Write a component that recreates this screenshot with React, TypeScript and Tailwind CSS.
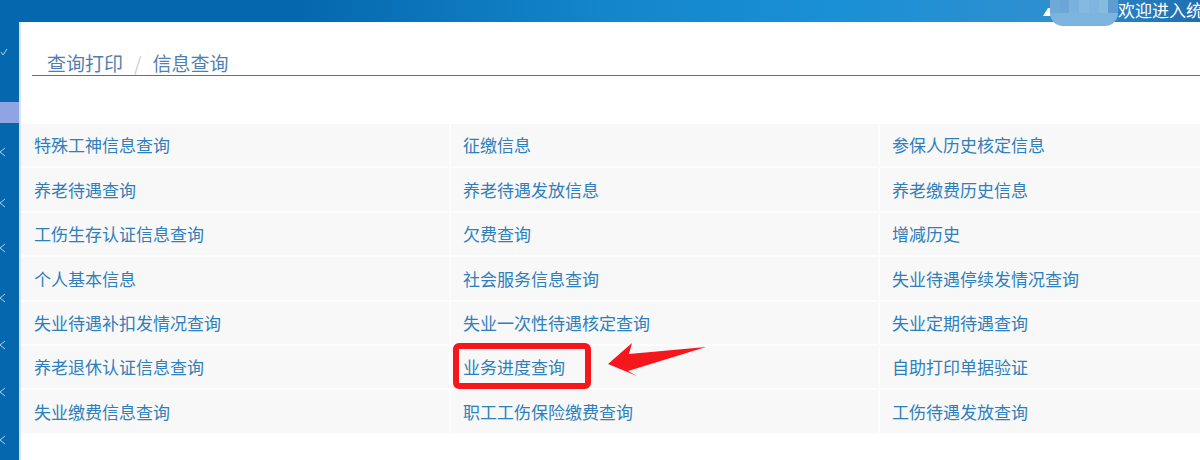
const ROWS = [
  ["特殊工神信息查询", "征缴信息", "参保人历史核定信息"],
  ["养老待遇查询", "养老待遇发放信息", "养老缴费历史信息"],
  ["工伤生存认证信息查询", "欠费查询", "增减历史"],
  ["个人基本信息", "社会服务信息查询", "失业待遇停续发情况查询"],
  ["失业待遇补扣发情况查询", "失业一次性待遇核定查询", "失业定期待遇查询"],
  ["养老退休认证信息查询", "业务进度查询", "自助打印单据验证"],
  ["失业缴费信息查询", "职工工伤保险缴费查询", "工伤待遇发放查询"],
];

// y centres of the sidebar chevrons
const CHEVRONS = [152, 203, 248, 298, 345, 392, 440];

// mosaic colours of the blurred-out user name
const MOSAIC = ["#6fa9d8", "#6da6d6", "#7ab2dd", "#84b9e1", "#7fb5de", "#86bbe2", "#5f9dd0"];

function Sidebar() {
  return (
    <div className="relative w-[19px] shrink-0 bg-[#0568ae]">
      <svg className="absolute left-0 top-[-22px]" width="19" height="460" fill="none" stroke="#a9cfea" strokeWidth="1">
        <path d="M1 52 L3 55 L7 49" />
        {CHEVRONS.map((y) => (
          <path key={y} d={`M5 ${y - 4} L0 ${y} L5 ${y + 4}`} />
        ))}
      </svg>
      <div className="absolute left-0 top-[80px] h-[21px] w-full bg-[#8fa5e3]" />
    </div>
  );
}

function Header() {
  return (
    <div className="relative h-[22px] shrink-0 overflow-hidden bg-[linear-gradient(90deg,#0568ae_0%,#0568ae_25%,#1385cb_50%,#1a90d6_70%,#2f8fcf_88%,#1f6fb0_100%)]">
      <div className="absolute left-[1118px] top-[-2px] whitespace-nowrap text-[17px] leading-[24px] text-white">
        欢迎进入统
      </div>
      <svg className="absolute left-[1042px] top-[6px]" width="10" height="12" fill="#ffffff">
        <path d="M1 10 L6 2 L9 2 L9 10 Z" />
      </svg>
    </div>
  );
}

export default function App() {
  return (
    <div className="relative flex h-[460px] w-[1200px] flex-col overflow-hidden bg-white font-['Noto_Sans_CJK_SC','Liberation_Sans',sans-serif]">
      <Header />
      <div className="flex flex-1">
        <Sidebar />
        <div className="flex-1 border-l-2 border-[#dbe4f2] bg-white">
          <div className="ml-[11px] mt-[28px] flex h-[25px] items-center gap-[11px] pl-[15px] text-[19px] leading-[26px] text-[#4f7fb0]">
            <span>查询打印</span>
            <span className="text-[#cfcfcf]">/</span>
            <span>信息查询</span>
          </div>
          <div className="ml-[11px] h-px bg-[#1a88c4]" />
          <div className="mt-[48px] flex flex-col">
            {ROWS.map((row, i) => (
              <div key={i} className="flex h-[44.4px] border-b-2 border-[#fdfdfd] bg-[#f8f8f8]">
                {row.map((cell, j) => (
                  <div
                    key={j}
                    className={`flex items-center text-[17px] text-[#2e7fbb] ${
                      j === 0 ? "w-[428px] pl-[13px]" : j === 1 ? "w-[429px] border-l-2 border-[#fdfdfd] pl-[12px]" : "flex-1 border-l-2 border-[#fdfdfd] pl-[12px]"
                    }`}
                  >
                    {cell}
                  </div>
                ))}
              </div>
            ))}
          </div>
        </div>
      </div>

      {/* blurred user name, lies over the header edge */}
      <div className="absolute left-[1050px] top-0 flex h-[26px] w-[68px] overflow-hidden rounded-b-[13px] bg-[#7cb4dd]">
        {MOSAIC.map((c) => (
          <div key={c} className="h-[13px] flex-1" style={{ backgroundColor: c }} />
        ))}
      </div>

      {/* red annotation drawn on top of the screenshot */}
      <div className="absolute left-[453px] top-[343px] h-[46px] w-[138px] rounded-[6px] border-[6px] border-[#f5171c]" />
      <svg className="absolute left-[605px] top-[340px]" width="105" height="40" fill="#f5171c">
        <path d="M3 24 L27 3 L24 14 L101 7 L23 31 L32 36 Z" />
      </svg>
    </div>
  );
}
